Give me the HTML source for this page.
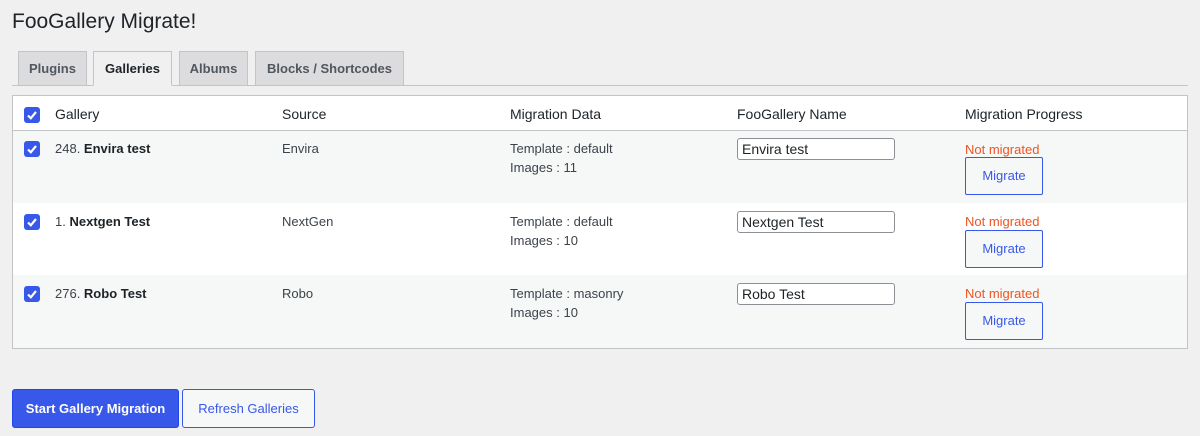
<!DOCTYPE html>
<html><head><style>
*{box-sizing:border-box;margin:0;padding:0}
body{width:1200px;height:436px;background:#f0f0f1;font-family:"Liberation Sans",sans-serif;color:#1d2327;position:relative;overflow:hidden;font-size:13px}
h1{position:absolute;left:12px;top:10px;font-size:21px;font-weight:400}
.tab{position:absolute;top:51px;height:35px;border:1px solid #c3c4c7;background:#dcdcde;font-weight:600;font-size:13px;line-height:33px;text-align:center;color:#50575e}
.tab.act{background:#f0f0f1;border-bottom-color:#f0f0f1;color:#1d2327;z-index:2}
.line{position:absolute;left:12px;top:85px;width:1176px;height:1px;background:#c3c4c7}
.tbl{position:absolute;left:12px;top:95px;width:1176px;height:254px;border:1px solid #c3c4c7;background:#fff}
.row{position:absolute;left:0;width:1174px;height:72px}
.cb{position:absolute;width:16px;height:16px;background:#3858e9;border-radius:3px;left:11px}
.cb svg{position:absolute;left:1px;top:1px}
.t{position:absolute;font-size:13px;color:#3c434a}
.h{position:absolute;font-size:14px;color:#1d2327}
.inp{position:absolute;left:724px;width:158px;height:22px;border:1px solid #8c8f94;border-radius:3px;background:#fff;font-size:14px;padding-left:4px;line-height:20px;color:#1d2327}
.nm{position:absolute;left:952px;color:#f0541e;font-size:13px}
.mb{position:absolute;left:952px;width:78px;height:38px;border:1px solid #3858e9;border-radius:2px;background:#f6f7f7;color:#3858e9;text-align:center;line-height:36px;font-size:13px}
.btn{position:absolute;top:389px;height:39px;border-radius:3px;font-size:13px;line-height:37px;text-align:center;font-weight:600}
</style></head><body>
<h1>FooGallery Migrate!</h1>
<div class="line"></div>
<div class="tab" style="left:18px;width:69px">Plugins</div>
<div class="tab act" style="left:93px;width:79px">Galleries</div>
<div class="tab" style="left:179px;width:69px">Albums</div>
<div class="tab" style="left:255px;width:149px">Blocks / Shortcodes</div>
<div class="tbl">
 <div class="row" style="top:0;height:35px;border-bottom:1px solid #c3c4c7;background:#fff">
  <div class="cb" style="top:11px"><svg width="14" height="14" viewBox="0 0 14 14"><path d="M3 7.5l2.8 2.8L11 4" stroke="#fff" stroke-width="2.2" fill="none"/></svg></div>
  <div class="h" style="left:42px;top:10px">Gallery</div>
  <div class="h" style="left:269px;top:10px">Source</div>
  <div class="h" style="left:497px;top:10px">Migration Data</div>
  <div class="h" style="left:724px;top:10px">FooGallery Name</div>
  <div class="h" style="left:952px;top:10px">Migration Progress</div>
 </div>
 <div class="row" style="top:35px;background:#f6f7f7">
  <div class="cb" style="top:10px"><svg width="14" height="14" viewBox="0 0 14 14"><path d="M3 7.5l2.8 2.8L11 4" stroke="#fff" stroke-width="2.2" fill="none"/></svg></div>
  <div class="t" style="left:42px;top:10px">248. <b style="color:#1d2327">Envira test</b></div>
  <div class="t" style="left:269px;top:10px">Envira</div>
  <div class="t" style="left:497px;top:10px">Template : default</div>
  <div class="t" style="left:497px;top:29px">Images : 11</div>
  <div class="inp" style="top:7px">Envira test</div>
  <div class="nm" style="top:11px">Not migrated</div>
  <div class="mb" style="top:26px">Migrate</div>
 </div>
 <div class="row" style="top:107px;background:#fff">
  <div class="cb" style="top:11px"><svg width="14" height="14" viewBox="0 0 14 14"><path d="M3 7.5l2.8 2.8L11 4" stroke="#fff" stroke-width="2.2" fill="none"/></svg></div>
  <div class="t" style="left:42px;top:11px">1. <b style="color:#1d2327">Nextgen Test</b></div>
  <div class="t" style="left:269px;top:11px">NextGen</div>
  <div class="t" style="left:497px;top:11px">Template : default</div>
  <div class="t" style="left:497px;top:30px">Images : 10</div>
  <div class="inp" style="top:8px">Nextgen Test</div>
  <div class="nm" style="top:11px">Not migrated</div>
  <div class="mb" style="top:27px">Migrate</div>
 </div>
 <div class="row" style="top:179px;background:#f6f7f7;height:73px">
  <div class="cb" style="top:11px"><svg width="14" height="14" viewBox="0 0 14 14"><path d="M3 7.5l2.8 2.8L11 4" stroke="#fff" stroke-width="2.2" fill="none"/></svg></div>
  <div class="t" style="left:42px;top:11px">276. <b style="color:#1d2327">Robo Test</b></div>
  <div class="t" style="left:269px;top:11px">Robo</div>
  <div class="t" style="left:497px;top:11px">Template : masonry</div>
  <div class="t" style="left:497px;top:30px">Images : 10</div>
  <div class="inp" style="top:8px">Robo Test</div>
  <div class="nm" style="top:11px">Not migrated</div>
  <div class="mb" style="top:27px">Migrate</div>
 </div>
</div>
<div class="btn" style="left:12px;width:167px;background:#3858e9;color:#fff;border:1px solid #2145e6">Start Gallery Migration</div>
<div class="btn" style="left:182px;width:133px;background:#f6f7f7;color:#3858e9;border:1px solid #3858e9;font-weight:500">Refresh Galleries</div>
</body></html>
